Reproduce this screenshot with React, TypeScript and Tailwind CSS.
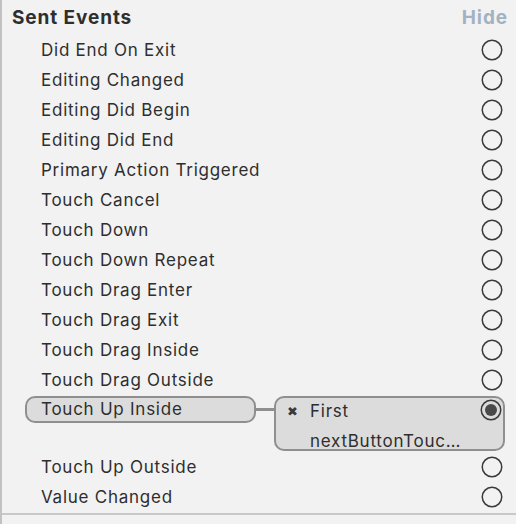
import React from 'react';

const before = [
  'Did End On Exit',
  'Editing Changed',
  'Editing Did Begin',
  'Editing Did End',
  'Primary Action Triggered',
  'Touch Cancel',
  'Touch Down',
  'Touch Down Repeat',
  'Touch Drag Enter',
  'Touch Drag Exit',
  'Touch Drag Inside',
  'Touch Drag Outside',
];

const after = ['Touch Up Outside', 'Value Changed'];

function Circle({ filled }: { filled?: boolean }) {
  return (
    <svg width="22" height="22" viewBox="0 0 22 22" className="shrink-0">
      <circle cx="11" cy="11" r="9.75" fill="none" stroke="#3a3a3a" strokeWidth="1.5" />
      {filled && <circle cx="11" cy="11" r="6" fill="#4a4a4a" />}
    </svg>
  );
}

function Row({ label }: { label: string }) {
  return (
    <div className="flex h-[30px] items-center justify-between pl-[39px] pr-[13px]">
      <span className="pt-[2px]">{label}</span>
      <Circle />
    </div>
  );
}

export default function App() {
  return (
    <div
      className="h-[524px] w-[516px] overflow-hidden border-l-2 border-[#c2c2c2] bg-[#f2f2f2] text-[17px] tracking-[0.75px] text-[#2e2e2e]"
      style={{ fontFamily: 'Inter, "Liberation Sans", sans-serif' }}
    >
      <div className="flex h-[35px] items-center justify-between pl-[10px] pr-[8px] pt-[2px]">
        <span className="text-[19px] font-bold tracking-[0.9px]">Sent Events</span>
        <span className="text-[19px] font-bold tracking-[0.9px] text-[#a3b2c2]">Hide</span>
      </div>

      {before.map((l) => (
        <Row key={l} label={l} />
      ))}

      <div className="flex h-[57px] items-start pt-[1px]">
        <div className="ml-[23px] flex h-[27px] w-[231px] items-center rounded-[10px] border-2 border-[#8f8f8f] bg-[#dcdcdc] pl-[14px] pt-[1px]">
          Touch Up Inside
        </div>
        <div className="mt-[12px] h-[3px] w-[18px] bg-[#8f8f8f]" />
        <div className="flex h-[55px] w-[231px] rounded-[10px] border-2 border-[#8f8f8f] bg-[#dcdcdc] pr-[1px]">
          <div className="flex w-[34px] justify-center pt-[4px] text-[13px] text-[#3a3a3a]">✖</div>
          <div className="flex-1 leading-[30px]">
            <div className="-mt-[2px]">First</div>
            <div>nextButtonTouc…</div>
          </div>
          <div className="pt-[1px]">
            <Circle filled />
          </div>
        </div>
      </div>

      {after.map((l) => (
        <Row key={l} label={l} />
      ))}

      <div className="mt-[1px] h-[2px] w-full bg-[#c8c8c8]" />
    </div>
  );
}
